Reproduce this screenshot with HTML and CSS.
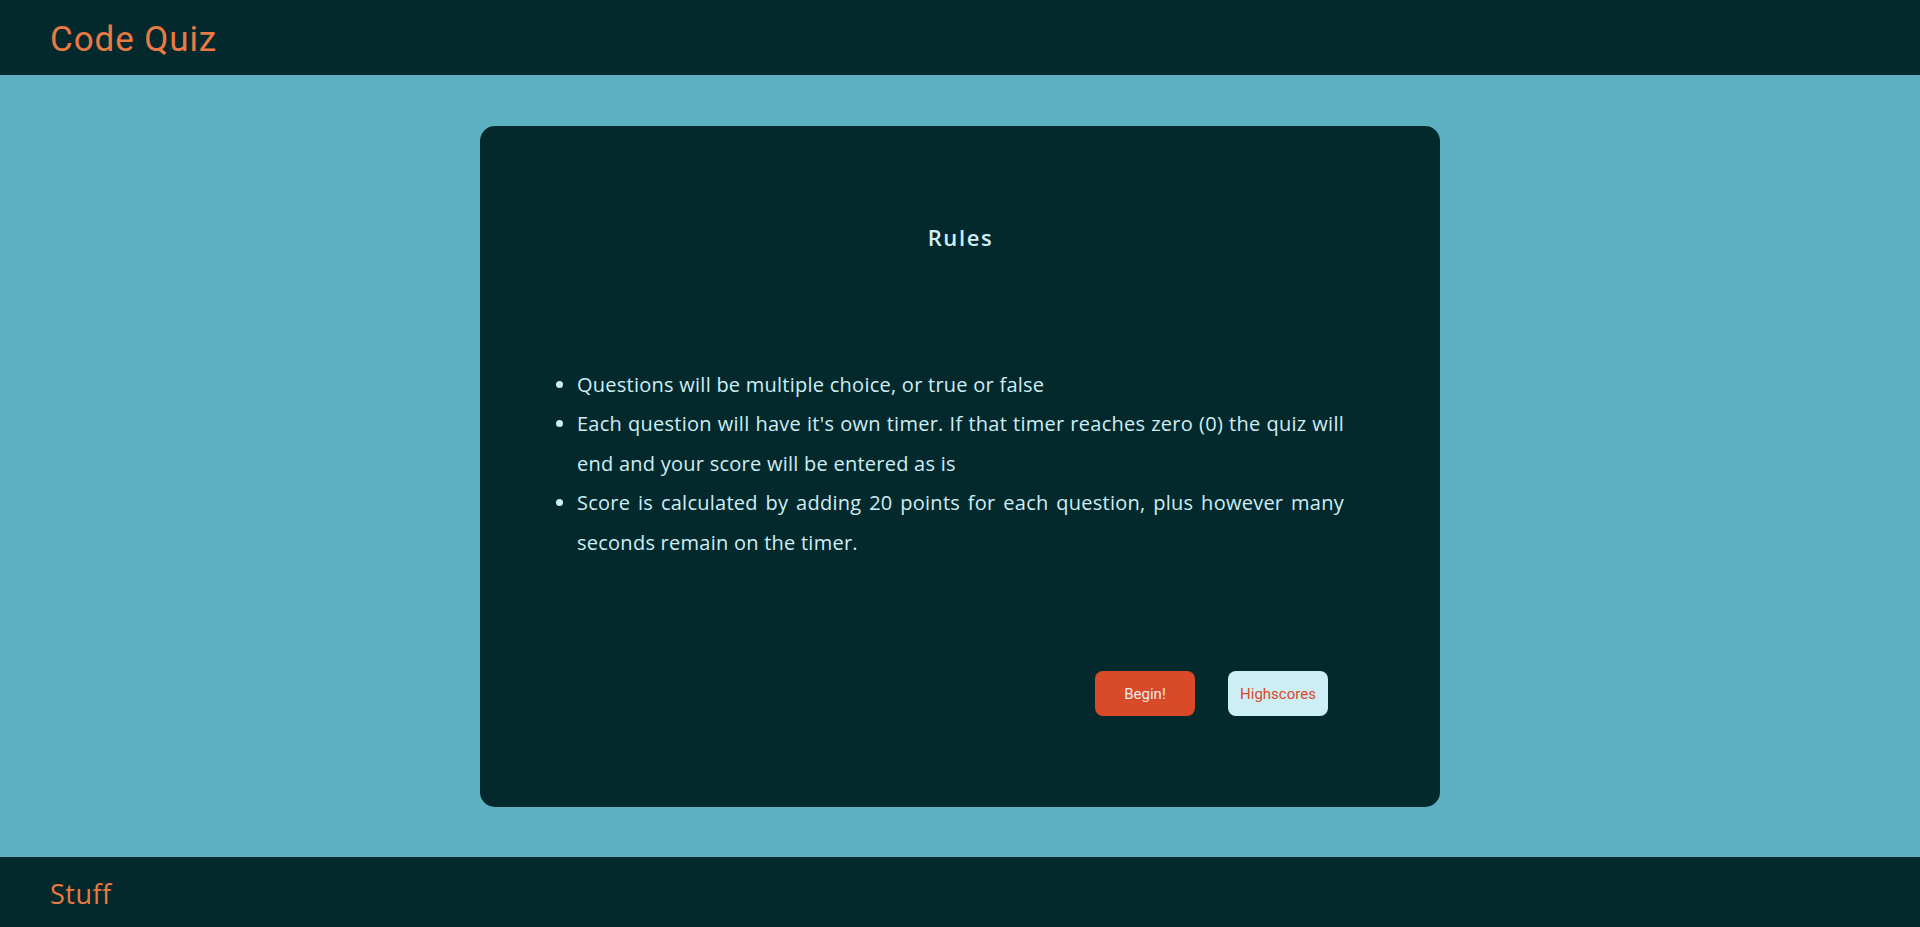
FILE: index.html
```html
<!DOCTYPE html>
<html lang="en">
<head>
<meta charset="utf-8">
<title>Code Quiz</title>
<link rel="stylesheet" href="styles.css">
</head>
<body>
<header class="site-header">
  <h1 class="brand">Code Quiz</h1>
</header>
<main class="main">
  <section class="card">
    <h2 class="card-title">Rules</h2>
    <ul class="rules">
      <li>Questions will be multiple choice, or true or false</li>
      <li>Each question will have it's own timer. If that timer reaches zero (0) the quiz will end and your score will be entered as is</li>
      <li>Score is calculated by adding 20 points for each question, plus however many seconds remain on the timer.</li>
    </ul>
    <div class="actions">
      <button class="btn btn-begin" type="button">Begin!</button>
      <button class="btn btn-scores" type="button">Highscores</button>
    </div>
  </section>
</main>
<footer class="site-footer">
  <span class="footer-text">Stuff</span>
</footer>
</body>
</html>
```

FILE: styles.css
```css
* { box-sizing: border-box; }

html, body {
  margin: 0;
  padding: 0;
}

body {
  height: 927px;
  display: flex;
  flex-direction: column;
  background: #5db0bf;
  font-family: "Open Sans", Roboto, sans-serif;
  overflow: hidden;
}

.site-header {
  height: 75px;
  flex: 0 0 75px;
  background: #04292d;
  display: flex;
  align-items: center;
  padding-left: 50px;
}

.brand {
  margin: 0;
  font-family: Roboto, "Open Sans", sans-serif;
  font-size: 35px;
  font-weight: 400;
  letter-spacing: 0.9px;
  color: #ea7a43;
  line-height: 1;
  padding-top: 4px;
}

.main {
  flex: 1;
  display: flex;
  justify-content: center;
  padding-top: 51px;
}

.card {
  width: 960px;
  height: 681px;
  background: #04292d;
  border-radius: 15px;
  padding: 96px 96px 0 97px;
  display: flex;
  flex-direction: column;
}

.card-title {
  margin: 0;
  text-align: center;
  font-size: 22px;
  font-weight: 600;
  letter-spacing: 1.6px;
  line-height: 30px;
  color: #cdeef5;
}

.rules {
  margin: 113px 0 0 0;
  padding: 0;
  list-style: disc outside;
  color: #cdeef5;
  font-size: 20px;
  letter-spacing: 0.25px;
  line-height: 39.4px;
  text-align: justify;
}

.actions {
  margin-top: 109px;
  display: flex;
  justify-content: flex-end;
  gap: 33px;
  padding-right: 16px;
}

.btn {
  width: 100px;
  height: 45px;
  border: none;
  border-radius: 8px;
  font-family: Roboto, "Open Sans", sans-serif;
  font-size: 15px;
  cursor: pointer;
}

.btn-begin {
  background: #d94a29;
  color: #ececec;
}

.btn-scores {
  background: #cdeef5;
  color: #d94a29;
}

.site-footer {
  height: 70px;
  flex: 0 0 70px;
  background: #04292d;
  display: flex;
  align-items: center;
  padding-left: 50px;
}

.footer-text {
  font-size: 27px;
  letter-spacing: 0.5px;
  color: #ea7a43;
  padding-top: 2px;
}
```
